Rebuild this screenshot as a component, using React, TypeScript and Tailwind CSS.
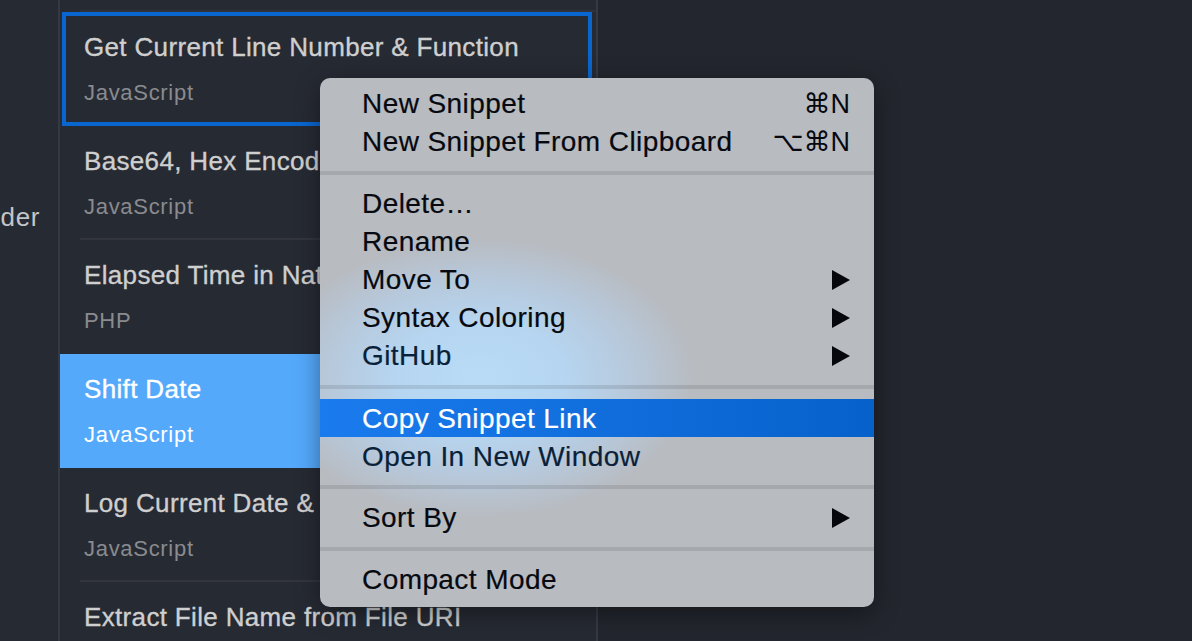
const snippets = [
  { title: 'Get Current Line Number & Function', lang: 'JavaScript', state: 'focused' },
  { title: 'Base64, Hex Encode & Decode', lang: 'JavaScript', state: '' },
  { title: 'Elapsed Time in Natural Language', lang: 'PHP', state: 'before' },
  { title: 'Shift Date', lang: 'JavaScript', state: 'selected' },
  { title: 'Log Current Date & Time', lang: 'JavaScript', state: '' },
  { title: 'Extract File Name from File URI', lang: 'JavaScript', state: '' },
]

type MenuItem = { label: string; keys?: string; arrow?: boolean; active?: boolean; tint?: boolean }

const menu: { gap: string; items: MenuItem[] }[] = [
  {
    gap: '',
    items: [
      { label: 'New Snippet', keys: '⌘N' },
      { label: 'New Snippet From Clipboard', keys: '⌥⌘N' },
    ],
  },
  {
    gap: 'mt-[11px] mb-[9px]',
    items: [
      { label: 'Delete…' },
      { label: 'Rename' },
      { label: 'Move To', arrow: true },
      { label: 'Syntax Coloring', arrow: true },
      { label: 'GitHub', arrow: true, tint: true },
    ],
  },
  {
    gap: 'mt-[11px] mb-[10px]',
    items: [
      { label: 'Copy Snippet Link', active: true },
      { label: 'Open In New Window', tint: true },
    ],
  },
  { gap: 'mt-[10px] mb-[9px]', items: [{ label: 'Sort By', arrow: true }] },
  { gap: 'mt-[11px] mb-[9px]', items: [{ label: 'Compact Mode' }] },
]

function SnippetRow({ title, lang, state }: { title: string; lang: string; state: string }) {
  const selected = state === 'selected'
  const focused = state === 'focused'
  return (
    <div
      className={`flex h-[114px] flex-col ${selected ? 'bg-[#54a9fb]' : ''} ${
        focused ? 'ml-[2px] mr-[4px] pl-[22px] ring-4 ring-inset ring-[#0a66cf]' : 'pl-6'
      }`}
    >
      <div
        className={`mt-[19px] text-[26px] leading-8 tracking-[0.34px] whitespace-nowrap [-webkit-text-stroke:0.35px] ${
          selected ? 'text-white' : 'text-[#cfcfcf]'
        }`}
      >
        {title}
      </div>
      <div className={`mt-[14px] text-[22px] leading-8 tracking-[0.7px] ${selected ? 'text-white' : 'text-[#8a8b8e]'}`}>
        {lang}
      </div>
      {!focused && !selected && state !== 'before' && <div className="mt-auto -ml-1 h-[2px] bg-[#32353e]" />}
    </div>
  )
}

function ContextMenu() {
  return (
    <div className="absolute left-[320px] top-[78px] flex h-[529px] w-[554px] flex-col overflow-hidden rounded-[10px] bg-[#b8bbc0] bg-[radial-gradient(ellipse_215px_140px_at_160px_300px,#b9dcf6_0%,#b6d5f0_40%,#b7c8da_72%,#b8bbc0_100%)] pt-[6px] text-[28px] leading-[38px] text-[#06090f] shadow-[0_6px_24px_rgba(0,0,0,0.4)]">
      {menu.map((group, i) => (
        <div key={i}>
          {i > 0 && <div className={`h-[4px] bg-black/10 ${group.gap}`} />}
          {group.items.map((item) => (
            <div
              key={item.label}
              className={`flex h-[38px] items-center justify-between pl-[42px] pr-6 pt-[1px] ${
                item.active ? 'bg-gradient-to-r from-[#1a7bee] to-[#0661cb] text-white' : ''
              } ${item.tint ? 'text-[#0a1f38]' : ''}`}
            >
              <span className="tracking-[0.42px] [-webkit-text-stroke:0.2px]">{item.label}</span>
              {item.keys && <span className="font-['Liberation_Sans','DejaVu_Sans',sans-serif] text-[27px]">{item.keys}</span>}
              {item.arrow && (
                <svg width="18" height="20" viewBox="0 0 18 20" className="fill-[#05070c]">
                  <polygon points="0,0 18,10 0,20" />
                </svg>
              )}
            </div>
          ))}
        </div>
      ))}
    </div>
  )
}

export default function App() {
  return (
    <div className="relative flex h-[641px] w-[1192px] overflow-hidden bg-[#23262e] font-['Liberation_Sans',Arial,sans-serif]">
      <aside className="flex w-[58px] shrink-0 justify-end bg-[#262a33] pr-[18px] pt-[201px] text-[26px] leading-8 tracking-[0.6px] text-[#c4c5c7]">
        der
      </aside>
      <div className="w-[2px] shrink-0 bg-[#363944]" />
      <main className="w-[536px] shrink-0 bg-[#262a33] pt-[10px]">
        <div className="ml-5 h-[2px] bg-[#2f323b]" />
        {snippets.map((s) => (
          <SnippetRow key={s.title} {...s} />
        ))}
      </main>
      <div className="w-[2px] shrink-0 bg-[#363944]" />
      <ContextMenu />
    </div>
  )
}
